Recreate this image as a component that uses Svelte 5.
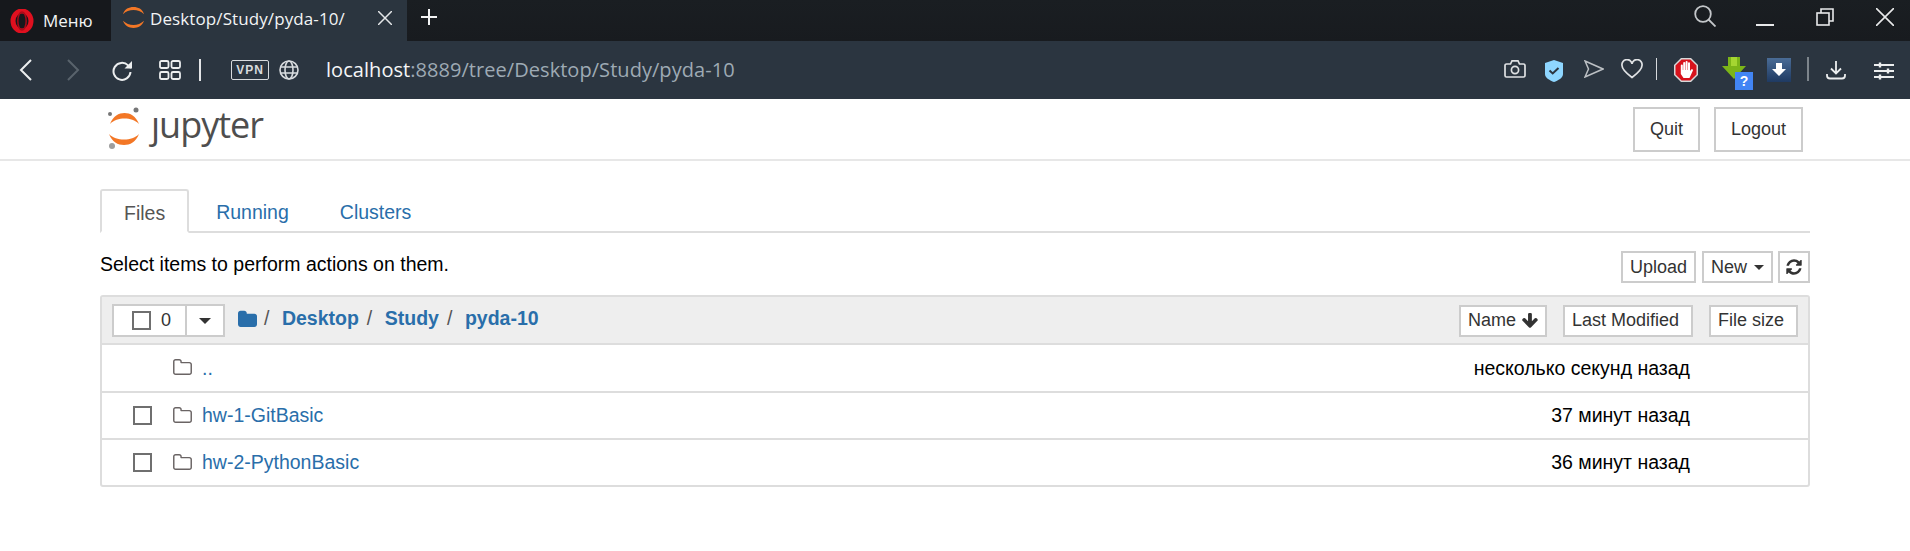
<script>
  const rows = [
    { name: '..', time: 'несколько секунд назад', check: false },
    { name: 'hw-1-GitBasic', time: '37 минут назад', check: true },
    { name: 'hw-2-PythonBasic', time: '36 минут назад', check: true }
  ];
  const crumbs = ['Desktop', 'Study', 'pyda-10'];
</script>

{#snippet folder()}
  <svg class="folder" width="19" height="16" viewBox="64 128 1664 1408" fill="#6a6464">
    <path d="M1600 1312v-704q0-40-28-68t-68-28h-704q-40 0-68-28t-28-68v-64q0-40-28-68t-68-28h-320q-40 0-68 28t-28 68v960q0 40 28 68t68 28h1216q40 0 68-28t28-68zm128-704v704q0 92-66 158t-158 66h-1216q-92 0-158-66t-66-158v-960q0-92 66-158t158-66h320q92 0 158 66t66 158v32h672q92 0 158 66t66 158z"/>
  </svg>
{/snippet}

<div class="browser">
  <div class="titlebar">
    <div class="menu">
      <svg width="24" height="24" viewBox="0 0 24 24">
        <ellipse cx="12" cy="12" rx="9" ry="10" fill="none" stroke="#e0101f" stroke-width="5"/>
        <ellipse cx="12" cy="12" rx="4.2" ry="9" fill="none" stroke="#a90a18" stroke-width="1.5"/>
      </svg>
      <span>Меню</span>
    </div>
    <div class="tab">
      <svg width="23" height="23" viewBox="0 0 24 24" fill="#f37726">
        <path d="M1 8.500C3 3 7 1 12 1s9 2 11 7.500C20 5.500 16 4.200 12 4.200S4 5.500 1 8.500z"/>
        <path d="M1 15.500C3 21 7 23 12 23s9-2 11-7.500C20 18.500 16 19.800 12 19.800S4 18.500 1 15.500z"/>
      </svg>
      <span class="tab-title">Desktop/Study/pyda-10/</span>
      <svg class="tab-x" width="14" height="14" viewBox="0 0 14 14" stroke="#e4e6e8" stroke-width="1.5"><path d="M0 0l14 14M14 0L0 14"/></svg>
    </div>
    <svg class="plus" width="16" height="16" viewBox="0 0 16 16" stroke="#f2f3f4" stroke-width="2"><path d="M8 0v16M0 8h16"/></svg>
    <div class="winctl">
      <svg class="w-search" width="22" height="22" viewBox="0 0 22 22" fill="none" stroke="#c4c7ca" stroke-width="1.800"><circle cx="9" cy="9" r="7.800"/><path d="M14.500 14.500l7 7"/></svg>
      <svg class="w-min" width="18" height="2" viewBox="0 0 18 2"><path d="M0 1h18" stroke="#e8e9ea" stroke-width="2"/></svg>
      <svg class="w-max" width="18" height="18" viewBox="0 0 18 18" fill="none" stroke="#e8e9ea" stroke-width="1.600"><rect x="1" y="5" width="12" height="12"/><path d="M5 5V1h12v12h-4"/></svg>
      <svg class="w-close" width="18" height="18" viewBox="0 0 18 18" stroke="#e8e9ea" stroke-width="1.600"><path d="M0 0l18 18M18 0L0 18"/></svg>
    </div>
  </div>

  <div class="toolbar">
    <svg class="t-back" width="13" height="22" viewBox="0 0 13 22" fill="none" stroke="#eceeef" stroke-width="2"><path d="M12 1L2 11l10 10"/></svg>
    <svg class="t-fwd" width="13" height="22" viewBox="0 0 13 22" fill="none" stroke="#59636c" stroke-width="2"><path d="M1 1l10 10L1 21"/></svg>
    <svg class="t-reload" width="21" height="21" viewBox="0 0 21 21" fill="none" stroke="#eceeef" stroke-width="2"><path d="M18.500 12a8.500 8.500 0 1 1-2.400-6.600L19 8"/><path d="M20 1v7.500h-7.500" stroke="none" fill="#eceeef"/></svg>
    <svg class="t-speed" width="22" height="20" viewBox="0 0 22 20" fill="none" stroke="#eceeef" stroke-width="1.800"><rect x="1" y="1" width="8.500" height="7" rx="1.500"/><rect x="12.500" y="1" width="8.500" height="7" rx="1.500"/><rect x="1" y="12" width="8.500" height="7" rx="1.500"/><rect x="12.500" y="12" width="8.500" height="7" rx="1.500"/></svg>
    <span class="t-sep"></span>
    <span class="vpn">VPN</span>
    <svg class="t-globe" width="20" height="20" viewBox="0 0 20 20" fill="none" stroke="#d8dbde" stroke-width="1.600"><circle cx="10" cy="10" r="9"/><ellipse cx="10" cy="10" rx="4" ry="9"/><path d="M1.500 7h17M1.500 13h17"/></svg>
    <div class="url"><span class="host">localhost</span>:8889/tree/Desktop/Study/pyda-10</div>
    <div class="tools">
      <svg class="i-cam" width="22" height="20" viewBox="0 0 22 20" fill="none" stroke="#dfe1e3" stroke-width="1.700"><path d="M2.500 5h4l1.500-3.200h6L15.500 5h4A1.500 1.500 0 0 1 21 6.500v10a1.500 1.500 0 0 1-1.500 1.500h-17A1.500 1.500 0 0 1 1 16.500v-10A1.500 1.500 0 0 1 2.500 5z"/><circle cx="11" cy="11" r="3.600"/></svg>
      <svg class="i-shield" width="18" height="22" viewBox="0 0 18 22"><path d="M9 0l9 3v11c0 4-5 6.500-9 8-4-1.500-9-4-9-8V3z" fill="#8ed6ff"/><path d="M4.500 10.500l3.200 3 5.800-5.500" fill="none" stroke="#2b3540" stroke-width="2"/></svg>
      <svg class="i-send" width="20" height="18" viewBox="0 0 20 18" fill="none" stroke="#bcc0c4" stroke-width="1.500"><path d="M1 1l18 8-18 8 3.500-8z"/></svg>
      <svg class="i-heart" width="22" height="20" viewBox="0 0 22 20" fill="none" stroke="#dfe1e3" stroke-width="1.700"><path d="M11 18.500C5 14 1 10.500 1 6.500A5 5 0 0 1 11 4.800 5 5 0 0 1 21 6.500c0 4-4 7.500-10 12z"/></svg>
      <span class="i-sep"></span>
      <svg class="i-abp" width="24" height="24" viewBox="0 0 24 24"><path d="M7 0h10l7 7v10l-7 7H7l-7-7V7z" fill="#d8d8d8"/><path d="M7.600 1.500h8.800l6.100 6.100v8.800l-6.100 6.100H7.600l-6.100-6.100V7.600z" fill="#d8121c"/><path d="M6.800 7.500a1 1 0 0 1 2 0V12h.4V5a1 1 0 0 1 2 0v7h.4V4a1 1 0 0 1 2 0v8h.4V5.200a1 1 0 0 1 2 0V13l1.300-1.600a1 1 0 0 1 1.500 1.300L15.500 20H9.500L6.800 16z" fill="#fff"/></svg>
      <div class="i-dl">
        <svg width="24" height="22" viewBox="0 0 24 22"><path d="M6 0h3v3h6V0h3v9h6L12 22 0 9h6z" fill="#7cb518"/><path d="M9 0h6v9H9z" fill="#a5d631"/></svg>
        <span class="q">?</span>
      </div>
      <svg class="i-box" width="24" height="24" viewBox="0 0 24 24"><defs><linearGradient id="boxg" x1="0" y1="0" x2="0" y2="1"><stop offset="0" stop-color="#4a6c96"/><stop offset="1" stop-color="#1f3a62"/></linearGradient></defs><rect width="24" height="24" fill="url(#boxg)"/><path d="M9 5h6v6h4l-7 7-7-7h4z" fill="#fff"/></svg>
      <span class="i-sep2"></span>
      <svg class="i-down" width="20" height="19" viewBox="0 0 20 19" fill="none" stroke="#eceeef" stroke-width="1.800"><path d="M10 0v12M5 7.500l5 5 5-5M1 13v1.500a3 3 0 0 0 3 3h12a3 3 0 0 0 3-3V13"/></svg>
      <svg class="i-set" width="20" height="18" viewBox="0 0 20 18" stroke="#eceeef" stroke-width="1.800"><path d="M0 3h20M0 9h20M0 15h20"/><path d="M6 0.500v5M14 6.500v5M6 12.500v5" stroke-width="2.400"/></svg>
    </div>
  </div>
</div>

<header class="jp-header">
  <div class="logo">
    <svg width="34" height="42" viewBox="0 0 34 42">
      <path d="M2 17C5 9 11 6 16.500 6S28 9 31 17c-4-4-9-5.500-14.500-5.500S6 13 2 17z" fill="#f37726"/>
      <path d="M1 27C4 35 10 38 16 38s12-3 15-11c-4 4-9 5.500-15 5.500S5 31 1 27z" fill="#f37726"/>
      <circle cx="28" cy="3" r="2.500" fill="#767677"/>
      <circle cx="2" cy="7" r="2" fill="#767677"/>
      <circle cx="4" cy="39" r="3" fill="#9e9e9e"/>
    </svg>
    <span aria-label="jupyter">ȷupyter</span>
  </div>
  <div class="head-btns">
    <button class="btn big">Quit</button>
    <button class="btn big">Logout</button>
  </div>
</header>

<main class="page">
  <nav class="tabs">
    <span class="jtab active">Files</span>
    <span class="jtab">Running</span>
    <span class="jtab">Clusters</span>
  </nav>

  <div class="actions">
    <span>Select items to perform actions on them.</span>
    <div class="action-btns">
      <button class="btn">Upload</button>
      <button class="btn">New <i class="caret"></i></button>
      <button class="btn refresh" aria-label="Refresh">
        <svg width="18" height="18" viewBox="0 0 1792 1792" fill="#333"><path d="M1639 1056q0 5-1 7-64 268-268 434.5t-478 166.5q-146 0-282.5-55t-243.5-157l-129 129q-19 19-45 19t-45-19-19-45v-448q0-26 19-45t45-19h448q26 0 45 19t19 45-19 45l-137 137q71 66 161 102t187 36q134 0 250-65t186-179q11-17 53-117 8-23 30-23h192q13 0 22.5 9.5t9.5 22.5zm25-800v448q0 26-19 45t-45 19h-448q-26 0-45-19t-19-45 19-45l138-138q-148-137-349-137-134 0-250 65t-186 179q-11 17-53 117-8 23-30 23h-199q-13 0-22.5-9.5t-9.5-22.5v-7q65-268 270-434.5t480-166.5q146 0 284 55.5t245 156.5l130-129q19-19 45-19t45 19 19 45z"/></svg>
      </button>
    </div>
  </div>

  <section class="list">
    <div class="list-head">
      <div class="select-group">
        <span class="sel-main"><i class="check"></i><span>0</span></span>
        <span class="sel-caret"><i class="caret"></i></span>
      </div>
      <div class="crumbs">
        <svg width="19" height="17" viewBox="64 64 1664 1472" fill="#296eaa"><path d="M1728 608v704q0 92-66 158t-158 66h-1216q-92 0-158-66t-66-158v-960q0-92 66-158t158-66h320q92 0 158 66t66 158v32h672q92 0 158 66t66 158z"/></svg>
        <span class="slash">/</span>
        {#each crumbs as c, i}
          <a href="#top">{c}</a>
          {#if i < crumbs.length - 1}<span class="slash">/</span>{/if}
        {/each}
      </div>
      <div class="sorts">
        <button class="btn sort-name">Name
          <svg width="16" height="17" viewBox="100 150 1600 1470" fill="#333"><path d="M1675 832q0 53-37 90l-651 652q-39 37-91 37-53 0-90-37l-651-652q-38-36-38-90 0-53 38-91l74-75q39-37 91-37 53 0 90 37l294 294v-704q0-52 38-90t90-38h128q52 0 90 38t38 90v704l294-294q37-37 90-37 52 0 91 37l75 75q37 39 37 91z"/></svg>
        </button>
        <button class="btn sort-col">Last Modified</button>
        <button class="btn sort-col">File size</button>
      </div>
    </div>
    {#each rows as row}
      <div class="row">
        <span class="cell-check">{#if row.check}<i class="check"></i>{/if}</span>
        {@render folder()}
        <a href="#top" class="name">{row.name}</a>
        <span class="time">{row.time}</span>
      </div>
    {/each}
  </section>
</main>

<style>
  :global(body) {
    margin: 0;
    background: #fff;
    font-family: "Liberation Sans", Arial, sans-serif;
    font-size: 19.5px;
    color: #000;
    overflow: hidden;
  }
  i { display: inline-block; }
  a { color: #296eaa; text-decoration: none; }

  /* browser chrome */
  .titlebar {
    height: 41px;
    background: linear-gradient(#1a1e22, #181b1f);
    display: flex;
    align-items: stretch;
    font-family: "Open Sans", sans-serif;
    color: #f2f4f5;
  }
  .menu {
    width: 111px;
    background: #16181c;
    display: flex;
    align-items: center;
    gap: 9px;
    padding-left: 10px;
    box-sizing: border-box;
    font-size: 17px;
  }
  .tab {
    width: 296px;
    background: #2b353f;
    display: flex;
    align-items: center;
    padding-left: 11px;
    box-sizing: border-box;
    font-size: 17px;
  }
  .tab svg:first-child { margin-top: -7px; }
  .tab-title { margin-left: 5px; width: 228px; letter-spacing: 0.1px; margin-top: -5px; }
  .tab-x { margin-top: -5px; }
  .plus { align-self: center; margin: -7px 0 0 14px; }
  .winctl {
    margin-left: auto;
    display: flex;
    align-items: flex-start;
    padding-right: 16px;
  }
  .w-search { margin: 5px 40px 0 0; }
  .w-min { margin: 24px 42px 0 0; }
  .w-max { margin: 8px 42px 0 0; }
  .w-close { margin-top: 8px; }

  .toolbar {
    height: 58px;
    background: #2b3540;
    display: flex;
    align-items: center;
    color: #9eaab4;
  }
  .t-back { margin-left: 19px; }
  .t-fwd { margin-left: 35px; }
  .t-reload { margin-left: 32px; }
  .t-speed { margin-left: 26px; }
  .t-sep { width: 2px; height: 22px; background: #e2e4e6; margin-left: 18px; }
  .vpn {
    margin-left: 30px;
    width: 36px;
    height: 18px;
    border: 1px solid #d8dbde;
    border-radius: 2px;
    font: bold 12px "Liberation Sans", sans-serif;
    letter-spacing: 1px;
    text-align: center;
    line-height: 18px;
    color: #d8dbde;
  }
  .t-globe { margin-left: 10px; }
  .url { margin-left: 27px; font: 20px "Open Sans", sans-serif; white-space: nowrap; margin-top: -2px; letter-spacing: 0.05px; }
  .host { color: #f5f6f7; }
  .tools {
    margin-left: auto;
    display: flex;
    align-items: center;
    padding-right: 16px;
  }
  .i-cam { margin-top: -2px; }
  .i-shield { margin: 2px 0 0 19px; }
  .i-send { margin: -2px 0 0 21px; }
  .i-heart { margin: -2px 0 0 17px; }
  .i-sep { width: 1px; height: 22px; background: #d6d9dc; margin: -2px 0 0 13px; }
  .i-abp { margin-left: 17px; }
  .i-dl { position: relative; width: 31px; height: 33px; margin: 7px 0 0 24px; }
  .i-dl svg { display: block; }
  .q {
    position: absolute;
    left: 13px;
    top: 15px;
    width: 18px;
    height: 18px;
    background: #4285f4;
    color: #fff;
    font: bold 14px/18px "Liberation Sans", sans-serif;
    text-align: center;
  }
  .i-box { margin-left: 14px; }
  .i-sep2 { width: 2px; height: 24px; background: #7d858c; margin: -2px 0 0 16px; }
  .i-down { margin-left: 17px; }
  .i-set { margin: 1px 0 0 28px; }

  /* jupyter page */
  .jp-header {
    height: 62px;
    border-bottom: 2px solid #e7e7e7;
    box-sizing: border-box;
    display: flex;
    align-items: flex-start;
    justify-content: space-between;
    padding: 8px 107px 0 108px;
  }
  .logo { display: flex; align-items: flex-start; gap: 9px; }
  .logo span {
    font: 36px "Open Sans", sans-serif;
    color: #4e4e4e;
    line-height: 40px;
    margin-top: -2px;
    letter-spacing: -1px;
  }
  .head-btns { display: flex; gap: 14px; }
  .btn {
    border: 2px solid #ccc;
    background: #fff;
    border-radius: 0;
    color: #333;
    font: 18px "Liberation Sans", sans-serif;
    height: 32px;
    padding: 0 7px;
    display: inline-flex;
    align-items: center;
    justify-content: center;
    gap: 7px;
  }
  .btn.big { height: 45px; padding: 0 15px; }

  .page { padding: 28px 100px 0; }
  .tabs {
    display: flex;
    height: 44px;
    border-bottom: 2px solid #ddd;
    box-sizing: border-box;
  }
  .jtab {
    padding: 11px 23px 0;
    color: #296eaa;
    line-height: 24px;
    margin-right: 5px;
  }
  .jtab.active {
    color: #555;
    border: 2px solid #ddd;
    border-bottom: 2px solid #fff;
    border-radius: 3px 3px 0 0;
    padding: 10px 22px 0 22px;
    height: 44px;
    box-sizing: border-box;
    background: #fff;
    margin-right: 4px;
  }
  .actions {
    display: flex;
    justify-content: space-between;
    align-items: flex-start;
    margin-top: 18px;
    height: 44px;
  }
  .actions > span { line-height: 26px; }
  .action-btns { display: flex; gap: 6px; }
  .action-btns .btn:last-child { margin-left: -1px; }
  .refresh { width: 32px; padding: 0; }
  .caret {
    width: 0;
    height: 0;
    border-left: 5px solid transparent;
    border-right: 5px solid transparent;
    border-top: 5px solid #333;
  }
  .action-btns .btn { padding: 0 7px; }
  .action-btns .refresh { padding: 0; }

  .list {
    border: 2px solid #ddd;
    border-radius: 3px;
  }
  .list-head {
    height: 48px;
    background: #eee;
    display: flex;
    align-items: center;
    padding: 0 10px;
    box-sizing: border-box;
    border-bottom: 2px solid #ddd;
  }
  .select-group { display: flex; height: 33px; margin-top: 1px; }
  .sel-main {
    width: 75px;
    border: 2px solid #ccc;
    background: #fff;
    box-sizing: border-box;
    display: flex;
    align-items: center;
    gap: 10px;
    padding-left: 18px;
    color: #333;
    font-size: 18px;
  }
  .sel-caret {
    width: 38px;
    border: 2px solid #ccc;
    border-left: 0;
    background: #fff;
    box-sizing: border-box;
    display: flex;
    align-items: center;
    justify-content: center;
  }
  .sel-caret .caret { border-width: 6px 6px 0; }
  .check {
    width: 19px;
    height: 19px;
    border: 2px solid #6f6f6f;
    box-sizing: border-box;
    background: #fff;
  }
  .crumbs {
    display: flex;
    align-items: center;
    margin-left: 13px;
    font-weight: bold;
    margin-top: -3px;
  }
  .crumbs svg { margin-right: 7px; margin-top: -1px; }
  .slash { color: #555; font-weight: normal; margin-right: 12.500px; }
  .crumbs a + .slash { margin-left: 8px; }
  .sorts { margin-left: auto; display: flex; gap: 16px; margin-top: 1px; }
  .sort-col { padding: 0 12px 0 7px; }
  .sort-name { padding: 0 7px; gap: 6px; }

  .row {
    height: 47px;
    display: flex;
    align-items: center;
    border-top: 2px solid #ddd;
    box-sizing: border-box;
    padding-right: 118px;
  }
  .list-head + .row { border-top: 0; height: 46px; }
  .cell-check { width: 31px; margin-left: 31px; display: flex; }
  .folder { margin-left: 9px; margin-top: -2px; }
  .name { margin-left: 10px; }
  .time { margin-left: auto; }
</style>
